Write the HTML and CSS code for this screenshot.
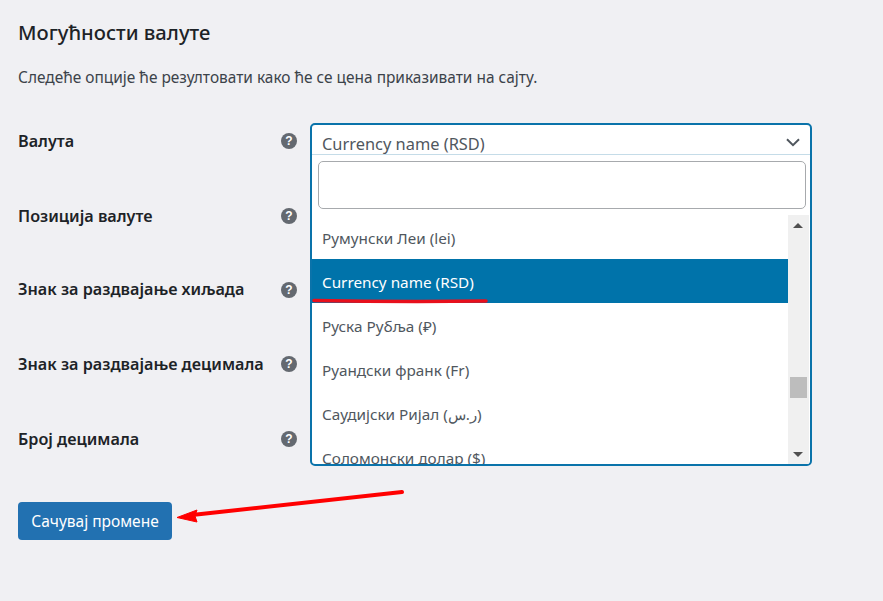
FILE: index.html
```html
<!DOCTYPE html>
<html lang="sr">
<head>
<meta charset="utf-8">
<title>Могућности валуте</title>
<link rel="stylesheet" href="styles.css">
</head>
<body>
<main class="page">
  <h2 class="title">Могућности валуте</h2>
  <p class="intro">Следеће опције ће резултовати како ће се цена приказивати на сајту.</p>
  <div class="form-rows">
    <div class="row r1"><span class="label">Валута</span><span class="help">?</span></div>
    <div class="row r2"><span class="label">Позиција валуте</span><span class="help">?</span></div>
    <div class="row r3"><span class="label">Знак за раздвајање хиљада</span><span class="help">?</span></div>
    <div class="row r4"><span class="label">Знак за раздвајање децимала</span><span class="help">?</span></div>
    <div class="row r5"><span class="label">Број децимала</span><span class="help">?</span></div>
  </div>
  <button class="save" type="button">Сачувај промене</button>

  <div class="select">
    <div class="select-head">
      <span class="current">Currency name (RSD)</span>
      <svg class="chev" width="14" height="9" viewBox="0 0 14 9"><path d="M1 1.2 7 7.2 13 1.2" fill="none" stroke="#50575e" stroke-width="2"/></svg>
    </div>
    <div class="search-wrap"><div class="search"></div></div>
    <div class="list-wrap">
      <ul class="list">
        <li>Румунски Леи (lei)</li>
        <li class="active">Currency name (RSD)</li>
        <li>Руска Рубља (₽)</li>
        <li>Руандски франк (Fr)</li>
        <li>Саудијски Ријал (ر.س)</li>
        <li>Соломонски долар ($)</li>
      </ul>
      <div class="scrollbar">
        <span class="tri up"></span>
        <span class="thumb"></span>
        <span class="tri down"></span>
      </div>
    </div>
  </div>

  <svg class="marks" width="883" height="601" viewBox="0 0 883 601">
    <path d="M314 300.500 Q400 302 486 301" fill="none" stroke="#e8101c" stroke-width="3.500" stroke-linecap="round"/>
    <path d="M402 492 L192 515" fill="none" stroke="#f00" stroke-width="4" stroke-linecap="round"/>
    <path d="M177 517.500 L197 510 L195 516 L197 522 Z" fill="#f00" stroke="#f00" stroke-width="1"/>
  </svg>
</main>
</body>
</html>
```
FILE: styles.css
```css
* { box-sizing: border-box; }
html, body { margin: 0; height: 100%; }
body {
  background: #f0f0f3;
  color: #2c3338;
  font-family: "Noto Sans", "Open Sans", sans-serif;
  overflow: hidden;
}
.page { position: relative; width: 883px; height: 601px; padding: 19px 0 0 18px; }
.title { margin: 0; font-size: 20.200px; line-height: 26px; font-weight: 500; color: #1d2327; }
.intro { margin: 20px 0 0; font-size: 15.450px; line-height: 24px; color: #3c434a; }
.form-rows { margin-top: 40px; width: 280px; }
.row { display: flex; align-items: center; justify-content: space-between; height: 24px; width: 279px; }
.r2, .r4, .r5 { margin-top: 51px; }
.r3 { margin-top: 49px; }
.label { font-size: 16.200px; font-weight: 600; color: #1d2327; line-height: 24px; white-space: nowrap; }
.help {
  width: 16px; height: 16px; border-radius: 50%;
  background: #646970; color: #fff;
  font: 700 12px/16px "Liberation Sans", sans-serif;
  text-align: center; flex: none;
}
.r3 .help { position: relative; top: 1px; }
.save {
  display: block; margin-top: 51px; width: 154px; height: 38px;
  background: #2271b1; color: #fff; border: 0; border-radius: 4px;
  font-family: inherit; font-size: 15.500px; padding: 0;
}
.select {
  position: absolute; left: 310px; top: 123px; width: 502px; height: 343px;
  background: #fff; border: 2px solid #0a73aa; border-radius: 5px; overflow: hidden;
}
.select-head {
  display: flex; align-items: center; justify-content: space-between;
  height: 30px; padding: 2px 10px 0 10px;
  border-bottom: 1px solid #c5dce8;
  color: #50575e;
}
.current { font-size: 16.400px; line-height: 24px; position: relative; top: 3px; }
.chev { position: relative; top: 2px; }
.search-wrap { padding: 6px 4px 6px 6px; }
.search { width: 488px; height: 48px; border: 1px solid #a7aaad; border-radius: 5px; background: #fff; }
.list-wrap { display: flex; height: 251px; }
.list { list-style: none; margin: 0; padding: 0; width: 476px; height: 251px; overflow: hidden; }
.list li { height: 44px; padding: 1px 10px 0; font-size: 15.300px; line-height: 44px; color: #50575e; white-space: nowrap; }
.list li.active { background: #0073aa; color: #fff; }
.scrollbar { position: relative; width: 21px; height: 251px; background: #f0f0f0; }
.thumb { position: absolute; left: 2px; top: 162px; width: 17px; height: 21px; background: #bdbdbd; }
.tri { position: absolute; left: 5px; width: 0; height: 0; border-left: 5px solid transparent; border-right: 5px solid transparent; }
.tri.up { top: 8px; border-bottom: 5px solid #505050; }
.tri.down { bottom: 9px; border-top: 5px solid #505050; }
.marks { position: absolute; left: 0; top: 0; pointer-events: none; }
```
